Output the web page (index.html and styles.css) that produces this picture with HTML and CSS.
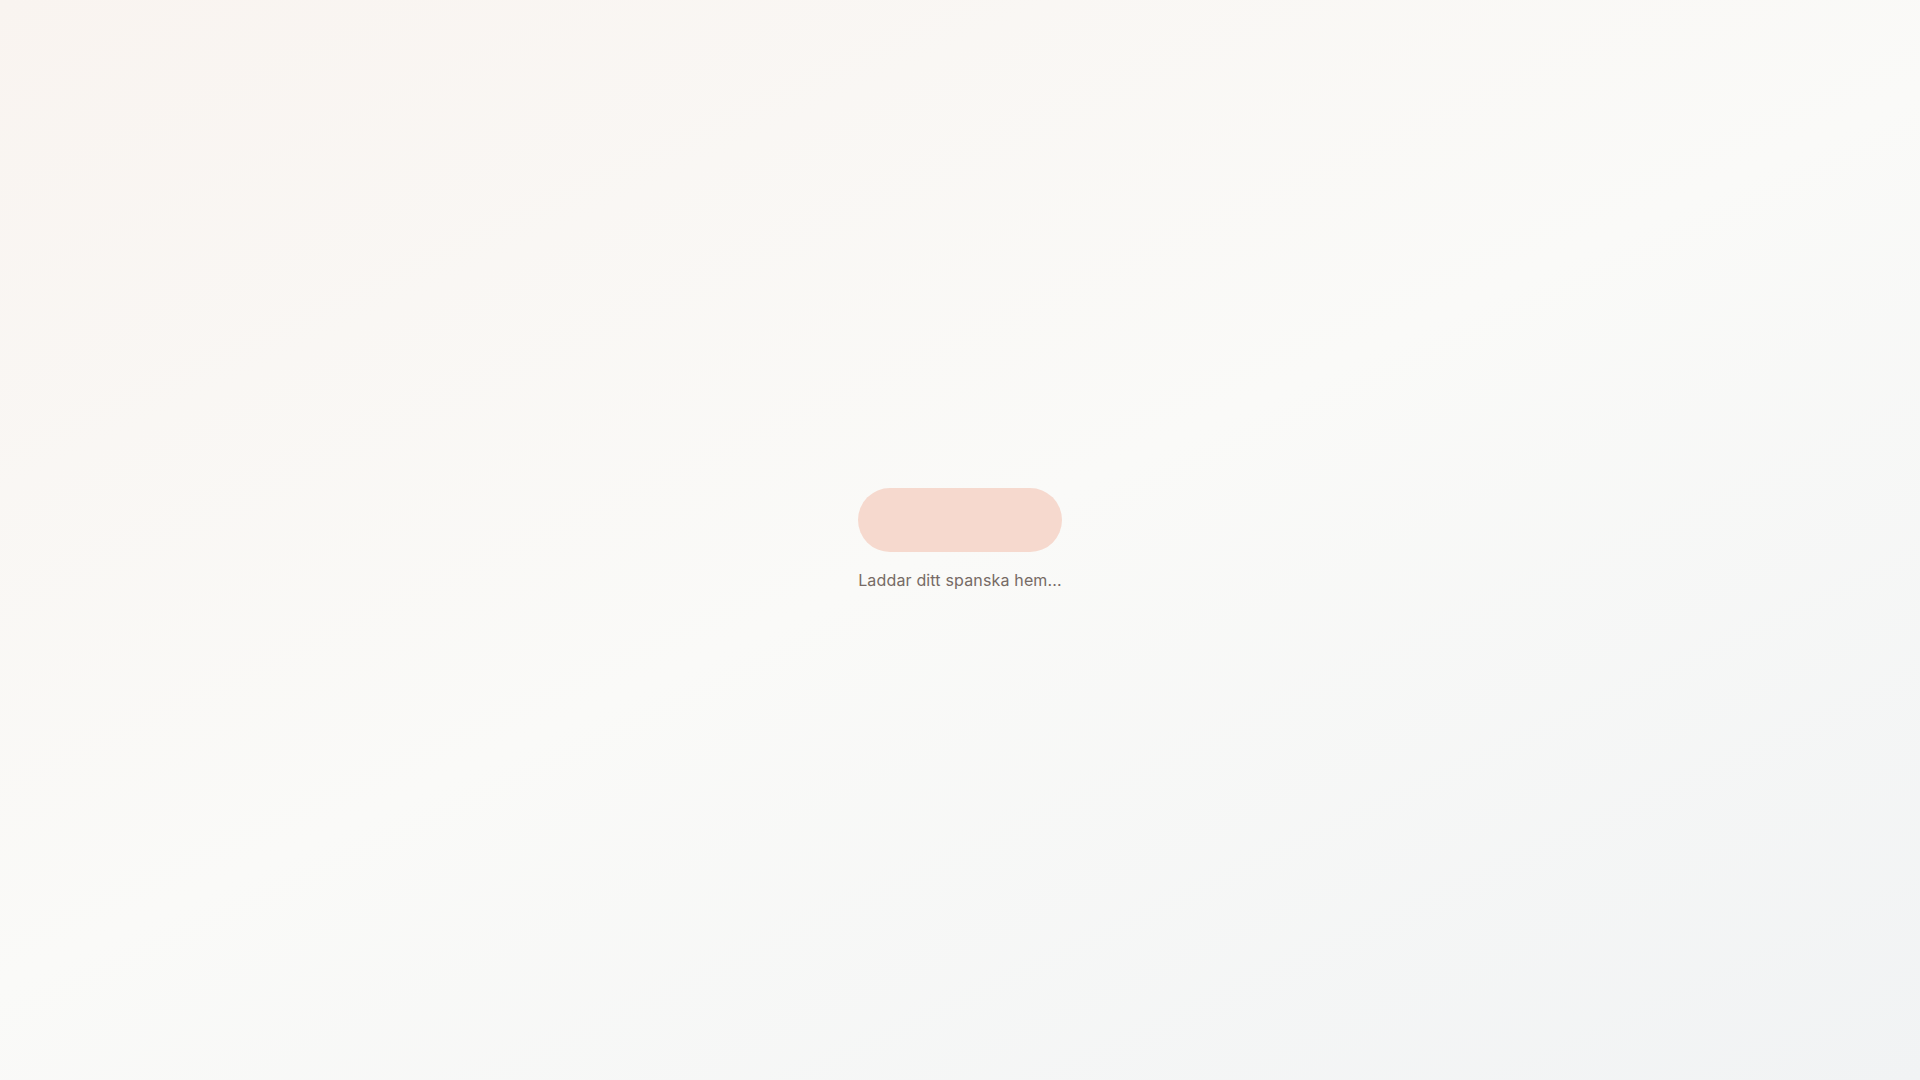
FILE: index.html
```html
<!DOCTYPE html>
<html lang="sv">
<head>
<meta charset="utf-8">
<title>Laddar</title>
<link rel="stylesheet" href="styles.css">
</head>
<body>
<main class="screen">
  <div class="loader">
    <div class="pill"></div>
    <p class="label">Laddar ditt spanska hem...</p>
  </div>
</main>
</body>
</html>
```
FILE: styles.css
```css
html, body {
  margin: 0;
  padding: 0;
  height: 100%;
}
body {
  font-family: Inter, "Noto Sans", sans-serif;
  background: linear-gradient(155deg, #f9f4f0 0%, #fafaf8 50%, #f1f3f4 100%);
}
.screen {
  height: 100vh;
  display: flex;
  align-items: center;
  justify-content: center;
}
.loader {
  display: flex;
  flex-direction: column;
  align-items: center;
  gap: 16px;
}
.pill {
  width: 204px;
  height: 64px;
  border-radius: 32px;
  background: #f6d9ce;
}
.label {
  margin: 0;
  font-size: 16px;
  line-height: 24px;
  letter-spacing: 0.16px;
  color: #766a65;
  font-weight: 400;
}
```
